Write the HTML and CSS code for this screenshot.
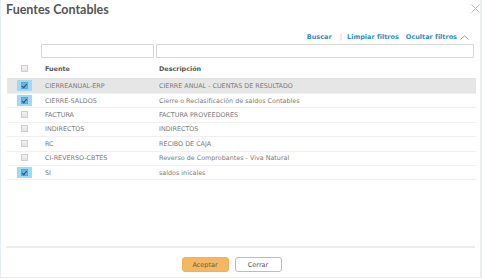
FILE: index.html
```html
<!DOCTYPE html>
<html lang="es">
<head>
<meta charset="utf-8">
<title>Fuentes Contables</title>
<link rel="stylesheet" href="styles.css">
</head>
<body>
<div class="modal">
  <div class="modal-header">
    <h1 class="title">Fuentes Contables</h1>
    <button class="close" aria-label="Cerrar">
      <svg width="9" height="9" viewBox="0 0 9 9"><path d="M0.5 0.5 L8.5 8.5 M8.5 0.5 L0.5 8.5" stroke="#b8b8b8" stroke-width="1" fill="none"/></svg>
    </button>
  </div>
  <div class="toolbar">
    <a class="link">Buscar</a>
    <span class="sep">|</span>
    <a class="link">Limpiar filtros</a>
    <a class="link hide">Ocultar filtros
      <svg class="chev" width="9" height="5" viewBox="0 0 9 5"><path d="M0.5 4.5 L4.5 0.8 L8.5 4.5" stroke="#9a9a9a" stroke-width="1" fill="none"/></svg>
    </a>
  </div>
  <div class="filters">
    <input class="f1" type="text">
    <input class="f2" type="text">
  </div>
  <div class="grid">
    <div class="row head">
      <div class="c-chk"><span class="cbw"><span class="cb"></span></span></div>
      <div class="c-src">Fuente</div>
      <div class="c-desc">Descripción</div>
    </div>
    <div class="row sel">
      <div class="c-chk"><span class="cbw on"><span class="cb"></span></span></div>
      <div class="c-src">CIERREANUAL-ERP</div>
      <div class="c-desc">CIERRE ANUAL - CUENTAS DE RESULTADO</div>
    </div>
    <div class="row">
      <div class="c-chk"><span class="cbw on"><span class="cb"></span></span></div>
      <div class="c-src">CIERRE-SALDOS</div>
      <div class="c-desc">Cierre o Reclasificación de saldos Contables</div>
    </div>
    <div class="row">
      <div class="c-chk"><span class="cbw"><span class="cb"></span></span></div>
      <div class="c-src">FACTURA</div>
      <div class="c-desc">FACTURA PROVEEDORES</div>
    </div>
    <div class="row">
      <div class="c-chk"><span class="cbw"><span class="cb"></span></span></div>
      <div class="c-src">INDIRECTOS</div>
      <div class="c-desc">INDIRECTOS</div>
    </div>
    <div class="row">
      <div class="c-chk"><span class="cbw"><span class="cb"></span></span></div>
      <div class="c-src">RC</div>
      <div class="c-desc">RECIBO DE CAJA</div>
    </div>
    <div class="row">
      <div class="c-chk"><span class="cbw"><span class="cb"></span></span></div>
      <div class="c-src">CI-REVERSO-CBTES</div>
      <div class="c-desc">Reverso de Comprobantes - Viva Natural</div>
    </div>
    <div class="row">
      <div class="c-chk"><span class="cbw on"><span class="cb"></span></span></div>
      <div class="c-src">SI</div>
      <div class="c-desc">saldos inicales</div>
    </div>
  </div>
  <div class="footer">
    <button class="btn primary">Aceptar</button>
    <button class="btn">Cerrar</button>
  </div>
</div>
</body>
</html>
```
FILE: styles.css
```css
* { box-sizing: border-box; }
html, body { margin: 0; padding: 0; background: #fff; }
body { font-family: "DejaVu Sans", sans-serif; }

.modal {
  width: 482px;
  height: 278px;
  border-left: 1px solid #e6edf6;
  border-right: 2px solid #e6edf6;
  border-bottom: 1px solid #e6edf6;
  padding: 0 5px 0 5px;
  display: flex;
  flex-direction: column;
}

.modal-header {
  display: flex;
  justify-content: space-between;
  align-items: flex-start;
  height: 22px;
}
.title {
  margin: 2px 0 0 0;
  font-family: Lato, sans-serif;
  font-weight: 700;
  font-size: 12.5px;
  line-height: 16px;
  color: #555;
}
.close {
  border: 0;
  background: none;
  padding: 0;
  margin: 4px -5px 0 0;
  width: 9px;
  height: 9px;
  line-height: 0;
}

.toolbar {
  display: flex;
  justify-content: flex-end;
  align-items: center;
  height: 20px;
  padding: 10px 6px 0 0;
  font-family: "DejaVu Sans", sans-serif;
  font-size: 6.5px;
  font-weight: 700;
}
.link { color: #2a8fc8; }
.sep { color: #c8c8c8; margin: 0 5px 0 8px; font-weight: 400; font-size: 7px; }
.hide { margin-left: 7px; display: flex; align-items: center; }
.chev { margin-left: 3px; }

.filters {
  display: flex;
  gap: 2px;
  padding-left: 35px;
  height: 14px;
  margin-top: 2px;
}
.filters input {
  height: 14px;
  border: 1px solid #d6d6d6;
  border-radius: 1px;
  background: #fff;
  padding: 0;
  margin: 0;
}
.f1 { width: 113px; }
.f2 { width: 318px; }

.grid {
  margin: 2px 0 0 1px;
  width: 469px;
  font-size: 6.4px;
  color: #7a7a7a;
}
.row {
  display: flex;
  align-items: center;
  height: 14.4px;
  border-bottom: 1px solid #f0f0f0;
}
.row.head {
  height: 19px;
  border-bottom: 1px solid #e2e2e2;
  font-weight: 700;
  color: #555;
}
.row.sel { background: #e6e6e6; height: 15px; }
.c-chk { width: 34px; display: flex; justify-content: center; }
.c-src { width: 114px; padding-left: 4px; }
.c-desc { flex: 1; padding-left: 4px; }

.cbw {
  display: block;
  padding: 2px 4px;
  margin-top: -1px;
}
.cb {
  display: block;
  width: 7px;
  height: 7px;
  border: 1px solid #cfcfcf;
  background: linear-gradient(#f4f4f4, #e2e2e2);
  position: relative;
}
.cbw.on { background: #9fd9f4; }
.cbw.on .cb {
  border: 1px solid #5aa6d6;
  background: #6ab5df;
}
.cbw.on .cb::after {
  content: "";
  position: absolute;
  left: 1.5px;
  top: 0;
  width: 2px;
  height: 3.5px;
  border-right: 1px solid #1d4f86;
  border-bottom: 1px solid #1d4f86;
  transform: rotate(40deg);
}

.footer {
  margin-top: auto;
  border-top: 2px solid #ececec;
  height: 31px;
  display: flex;
  justify-content: center;
  align-items: flex-start;
  gap: 6px;
  padding: 9px 18px 0 0;
}
.btn {
  width: 47px;
  height: 15px;
  padding: 0;
  font-family: "DejaVu Sans", sans-serif;
  font-size: 6.5px;
  border-radius: 3px;
  border: 1px solid #bcbcbc;
  background: #fff;
  color: #555;
}
.btn.primary {
  background: #f4b862;
  border-color: #f1b15a;
  color: #6b5a3e;
}
```
